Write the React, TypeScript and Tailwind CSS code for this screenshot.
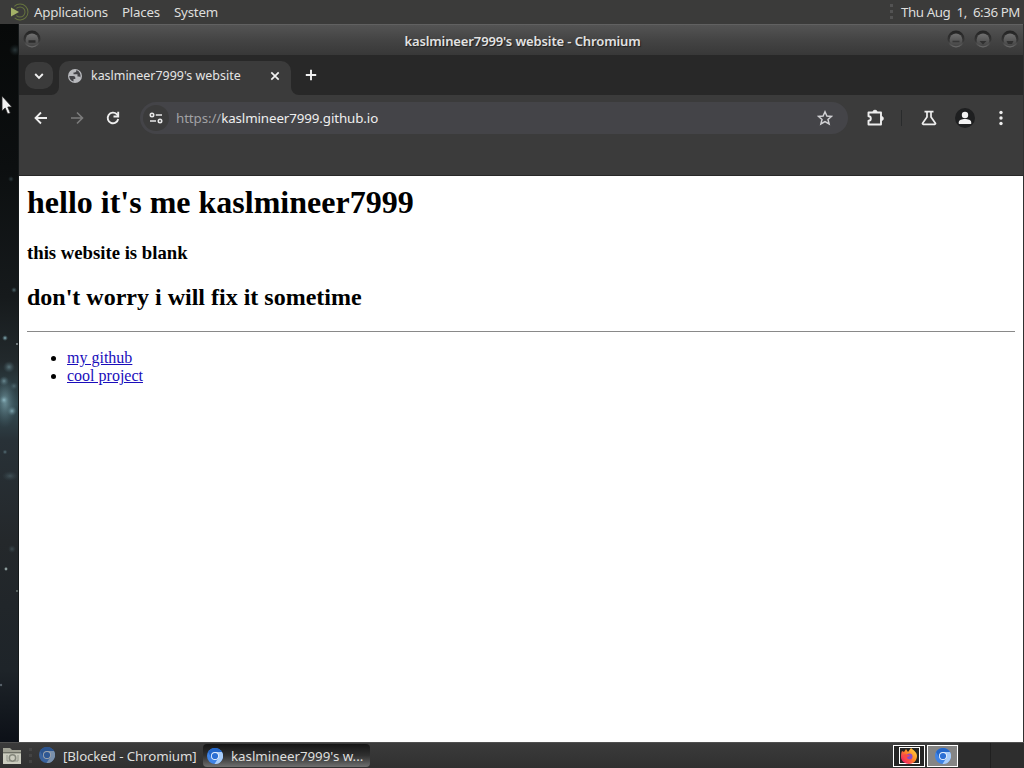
import React from 'react';

const WindowButton: React.FC<{ shape: 'menu' | 'min' | 'max' | 'close' }> = ({ shape }) => (
  <svg width="20" height="22" viewBox="0 0 20 22" className="block">
    <defs>
      <linearGradient id={`ring-${shape}`} x1="0" y1="0" x2="0" y2="1">
        <stop offset="0" stopColor="#232323" />
        <stop offset="0.6" stopColor="#353535" />
        <stop offset="1" stopColor="#6c6c6c" />
      </linearGradient>
      <linearGradient id={`face-${shape}`} x1="0" y1="0" x2="0" y2="1">
        <stop offset="0" stopColor="#707070" />
        <stop offset="1" stopColor="#444444" />
      </linearGradient>
    </defs>
    <circle cx="10" cy="10" r="8.5" fill={`url(#ring-${shape})`} />
    <circle cx="10" cy="10.8" r="6.4" fill={`url(#face-${shape})`} />
    {shape === 'menu' && <path d="M6.5 12.5h7" stroke="#2b2b2b" strokeWidth="2.5" />}
    {shape === 'min' && <path d="M6.5 12.5h7" stroke="#363636" strokeWidth="1.6" />}
    {shape === 'max' && <path d="M6.5 12h7L10 15.5z" fill="#303030" />}
    {shape === 'close' && <path d="M6.5 12h7L12 15H8z" fill="#303030" />}
  </svg>
);

const ChromiumLogo: React.FC<{ dim?: boolean }> = ({ dim }) => (
  <svg width="16" height="16" viewBox="0 0 16 16" className={dim ? 'block shrink-0 opacity-60' : 'block shrink-0'}>
    <circle cx="8" cy="8" r="8" fill="#3f83e6" />
    <path d="M8 4h7a8 8 0 0 1-7.5 12L11.4 10z" fill="#a9cdfa" />
    <path d="M1.1 4A8 8 0 0 1 14.9 4H8a4 4 0 0 0-3.5 6z" fill="#2467c9" />
    <circle cx="8" cy="8" r="4" fill="#e6effb" />
    <circle cx="8" cy="8" r="3.1" fill="#2b6fd4" />
  </svg>
);

const Grip = () => (
  <div className="flex flex-col gap-[3px]">
    <span className="block h-[3px] w-[3px] bg-[#535353]" />
    <span className="block h-[3px] w-[3px] bg-[#535353]" />
    <span className="block h-[3px] w-[3px] bg-[#535353]" />
  </div>
);

const TopPanel = () => (
  <header className="flex h-6 shrink-0 items-center bg-[#3b3b3a] text-[13.33px] text-[#dededc]">
    <svg width="20" height="20" viewBox="0 0 20 20" className="ml-[10px] block shrink-0" fill="none">
      <circle cx="10" cy="10" r="8" stroke="#66733f" strokeWidth="1" strokeDasharray="37 13" transform="rotate(-135 10 10)" />
      <circle cx="10" cy="10" r="5" stroke="#66733f" strokeWidth="1" strokeDasharray="23 9" transform="rotate(-135 10 10)" />
      <path d="M1 5.5L9 10l-8 4.5z" fill="#a4b167" />
    </svg>
    <nav className="ml-1 flex gap-[14px] pt-[2px] tracking-[-0.22px] whitespace-nowrap">
      <span className="w-[74px]">Applications</span>
      <span className="w-[38px]">Places</span>
      <span>System</span>
    </nav>
    <div className="ml-auto flex items-center gap-2 pr-1">
      <Grip />
      <span className="w-[119px] pt-[2px] tracking-[-0.42px] whitespace-nowrap">Thu Aug&nbsp; 1,&nbsp; 6:36 PM</span>
    </div>
  </header>
);

const Wallpaper = () => (
  <svg width="19" height="718" viewBox="0 0 19 718" className="block shrink-0">
    <defs>
      <linearGradient id="sky" x1="0" y1="0" x2="0" y2="1">
        <stop offset="0" stopColor="#070909" />
        <stop offset="0.2" stopColor="#0c0f10" />
        <stop offset="0.38" stopColor="#161a1c" />
        <stop offset="0.47" stopColor="#22292c" />
        <stop offset="0.53" stopColor="#344c53" />
        <stop offset="0.58" stopColor="#283137" />
        <stop offset="0.72" stopColor="#24282b" />
        <stop offset="0.9" stopColor="#1e2429" />
        <stop offset="1" stopColor="#0c1017" />
      </linearGradient>
      <radialGradient id="glow">
        <stop offset="0" stopColor="#91bac4" />
        <stop offset="1" stopColor="#50717b" stopOpacity="0" />
      </radialGradient>
    </defs>
    <rect width="19" height="718" fill="url(#sky)" />
    <ellipse cx="5" cy="378" rx="12" ry="26" fill="url(#glow)" opacity="0.6" />
    <circle cx="4" cy="376" r="5" fill="url(#glow)" />
    <circle cx="12" cy="387" r="5" fill="url(#glow)" opacity="0.8" />
    <circle cx="15" cy="26" r="6" fill="url(#glow)" opacity="0.25" />
    <circle cx="11" cy="155" r="3" fill="url(#glow)" opacity="0.3" />
    <circle cx="14" cy="266" r="3" fill="url(#glow)" opacity="0.5" />
    <circle cx="5" cy="314" r="3" fill="url(#glow)" />
    <circle cx="17" cy="320" r="1" fill="#8d9699" />
    <circle cx="9" cy="343" r="6" fill="url(#glow)" opacity="0.5" />
    <circle cx="4" cy="357" r="5" fill="url(#glow)" opacity="0.6" />
    <circle cx="14" cy="362" r="4" fill="url(#glow)" opacity="0.35" />
    <circle cx="6" cy="545" r="1.4" fill="#8d9d9c" />
    <circle cx="17" cy="567" r="1" fill="#677570" />
    <ellipse cx="10" cy="452" rx="8" ry="5" fill="url(#glow)" opacity="0.25" />
    <circle cx="12" cy="525" r="4" fill="url(#glow)" opacity="0.25" />
    <circle cx="5" cy="428" r="2.5" fill="url(#glow)" opacity="0.5" />
    <circle cx="1" cy="661" r="1.2" fill="#59636b" />
    <rect x="18" width="1" height="718" fill="#15191a" />
  </svg>
);

const TitleBar = () => (
  <div className="flex h-[31px] shrink-0 items-center border-t border-[#616161] bg-linear-to-b from-[#545454] via-[#444444] to-[#383838] pl-[3px] pr-[3px]">
    <WindowButton shape="menu" />
    <h1 className="flex-1 pt-[3px] pl-[57px] text-center text-[13px] font-semibold tracking-[-0.12px] whitespace-nowrap text-[#e2e2e2] [text-shadow:1px_1px_1px_#202020]">
      kaslmineer7999's website - Chromium
    </h1>
    <div className="flex gap-[7px]">
      <WindowButton shape="min" />
      <WindowButton shape="max" />
      <WindowButton shape="close" />
    </div>
  </div>
);

const TabStrip = () => (
  <div className="flex h-10 shrink-0 bg-[#282828] pl-[6px]">
    <button className="mt-[7px] flex h-[27px] w-7 items-center justify-center rounded-[10px] bg-[#3b3b3b]">
      <svg width="10" height="8" viewBox="0 0 10 8" fill="none" stroke="#f1f1f1" strokeWidth="1.9">
        <path d="M1.2 2L5 5.8 8.8 2" />
      </svg>
    </button>
    <div className="relative ml-[6px] mt-[6px] flex h-[34px] w-[232px] items-center rounded-t-[10px] bg-[#3b3b3b] pb-[5px] pl-2 text-[12.45px] text-[#e5e5e5]">
      {/* curved feet of the active tab */}
      <svg width="8" height="8" viewBox="0 0 8 8" className="absolute bottom-0 -left-2">
        <path d="M8 0v8H0a8 8 0 0 0 8-8z" fill="#3b3b3b" />
      </svg>
      <svg width="8" height="8" viewBox="0 0 8 8" className="absolute -right-2 bottom-0">
        <path d="M0 0v8h8a8 8 0 0 1-8-8z" fill="#3b3b3b" />
      </svg>
      <svg width="16" height="16" viewBox="0 0 16 16" className="shrink-0">
        <circle cx="8" cy="8" r="7" fill="#b8b9bd" />
        <path d="M2.2 8.1h4.1c1.3 0 2 .7 2 1.8v1.2H6.5v2.5A6 6 0 0 1 2.2 8.1zM9.3 2.1v.6c0 1-.8 1.7-1.7 1.7H6.5v1.8h4v2.2h1.4c.7 0 1.2.4 1.5 1A6 6 0 0 0 9.3 2.1z" fill="#444448" />
      </svg>
      <span className="ml-2 w-[151px] pt-[2px] whitespace-nowrap">kaslmineer7999's website</span>
      <svg width="10" height="10" viewBox="0 0 10 10" className="ml-[28px] shrink-0" stroke="#f1f1f1" strokeWidth="1.7">
        <path d="M1.3 1.3l7.4 7.4M8.7 1.3L1.3 8.7" />
      </svg>
    </div>
    <svg width="12" height="12" viewBox="0 0 12 12" className="mt-[14px] ml-[14px]" stroke="#f1f1f1" strokeWidth="1.9">
      <path d="M6 .8v10.4M.8 6h10.4" />
    </svg>
  </div>
);

const Toolbar = () => (
  <div className="flex h-[46px] shrink-0 items-center bg-[#3b3b3b] pl-[14px]">
    <svg width="16" height="16" viewBox="0 0 16 16" fill="none" stroke="#eeeeee" strokeWidth="1.8">
      <path d="M14 8H3M8 2.5L2.5 8 8 13.5" />
    </svg>
    <svg width="16" height="16" viewBox="0 0 16 16" className="ml-5" fill="none" stroke="#7c7c7c" strokeWidth="1.6">
      <path d="M2 8h11M8 2.5L13.5 8 8 13.5" />
    </svg>
    <svg width="16" height="16" viewBox="0 0 16 16" className="ml-5" fill="none" stroke="#eeeeee" strokeWidth="1.9">
      <path d="M13.2 9A5.3 5.3 0 1 1 11.8 4.2L13.3 6" />
      <path d="M13.2 1.8v4.7H8.5" />
    </svg>
    <div className="ml-[19px] flex h-8 w-[708px] items-center rounded-full bg-[#444448] pl-[3px] pr-[15px]">
      <span className="flex h-[26px] w-[26px] items-center justify-center rounded-full bg-[#3b3b3b]">
        <svg width="14" height="12" viewBox="0 0 14 12" fill="none" stroke="#e8e8e8" strokeWidth="1.6">
          <circle cx="3" cy="3" r="1.7" />
          <path d="M6.8 3H13M1 9h6" />
          <circle cx="11" cy="9" r="1.7" />
        </svg>
      </span>
      <span className="ml-[7px] pt-[2px] text-[13.33px] tracking-[-0.1px] whitespace-nowrap text-[#eeeeee]">
        <span className="text-[#a1a1a4]">https://</span>kaslmineer7999.github.io
      </span>
      <svg width="16" height="16" viewBox="0 0 16 16" className="ml-auto" fill="none" stroke="#d0d0d3" strokeWidth="1.5">
        <path d="M8 1.8l1.9 4.2 4.6.4-3.5 3 1.1 4.5L8 11.5l-4.1 2.4L5 9.4 1.5 6.4 6.1 6z" />
      </svg>
    </div>
    <svg width="18" height="18" viewBox="0 0 18 18" className="ml-[18px]" fill="none" stroke="#eeeeee" strokeWidth="1.9" strokeLinejoin="round">
      <path d="M2.5 3.5H15V15.5H2.5V11.8a2.3 2.3 0 0 0 0-4.6z" />
      <path d="M7 3a2 1.8 0 0 1 4 0zM15.5 7.5a1.8 2 0 0 1 0 4z" fill="#eeeeee" strokeWidth="1" />
    </svg>
    <span className="ml-[17px] h-4 w-px bg-[#292b2c]" />
    <svg width="16" height="16" viewBox="0 0 16 16" className="ml-[19px]" fill="none" stroke="#eeeeee" strokeWidth="1.7" strokeLinejoin="round">
      <path d="M3.5 1.7h9M6 2v5L1.6 13.2a.7.7 0 0 0 .6 1.1h11.6a.7.7 0 0 0 .6-1.1L10 7V2" />
    </svg>
    <span className="ml-[18px] flex h-5 w-5 items-center justify-center rounded-full bg-[#1e1f20]">
      <svg width="14" height="14" viewBox="0 0 14 14" fill="#f2f2f2">
        <circle cx="7" cy="4" r="3.2" />
        <path d="M.8 13v-1.8C.8 9.2 4 8 7 8s6.2 1.2 6.2 3.2V13z" />
      </svg>
    </span>
    <svg width="4" height="16" viewBox="0 0 4 16" className="ml-[24px]" fill="#eeeeee">
      <circle cx="2" cy="2.5" r="1.7" />
      <circle cx="2" cy="8" r="1.7" />
      <circle cx="2" cy="13.5" r="1.7" />
    </svg>
  </div>
);

const WebPage = () => (
  <main className="flex-1 bg-white px-2 font-['Liberation_Serif',serif] text-black">
    <h1 className="pt-2 text-[32px] leading-[37px] font-bold">hello it's me kaslmineer7999</h1>
    <h3 className="mt-[21px] text-[18.72px] leading-[21px] font-bold">this website is blank</h3>
    <h2 className="mt-5 text-[24px] leading-[28px] font-bold">don't worry i will fix it sometime</h2>
    <hr className="mt-5 border-t border-[#898989]" />
    <ul className="mt-[17px] list-disc pl-10 text-base leading-[18px]">
      <li><a href="#github" className="text-[#1a0dbb] underline">my github</a></li>
      <li><a href="#project" className="text-[#1a0dbb] underline">cool project</a></li>
    </ul>
  </main>
);

const BottomPanel = () => (
  <footer className="flex h-[26px] shrink-0 items-center border-t border-[#505050] bg-linear-to-b from-[#3b3b3b] to-[#303030] text-[13.33px] text-[#dededc]">
    <svg width="19" height="18" viewBox="0 0 19 18" className="ml-[3px] block shrink-0">
      <path d="M0 1h7l2 2h9v14H0z" fill="#a2a396" />
      <path d="M0 5h18v1.5H0z" fill="#6f7167" />
      <path d="M0 6.5h18V17H0z" fill="#cbccbf" />
      <circle cx="9.5" cy="11" r="3.2" fill="none" stroke="#83867b" strokeWidth="1.5" />
      <path d="M4 8v6h3M12 14h3V8" fill="none" stroke="#92958a" />
    </svg>
    <div className="ml-[7px] opacity-50"><Grip /></div>
    <div className="ml-[4px] flex w-[167px] items-center gap-2 pl-[3px]">
      <ChromiumLogo dim />
      <span className="pt-[2px] tracking-[-0.12px] whitespace-nowrap">[Blocked - Chromium]</span>
    </div>
    <div className="flex h-[23px] w-[167px] items-center gap-2 rounded-sm bg-linear-to-b from-[#151515] via-[#303030] to-[#707070] pl-1">
      <ChromiumLogo />
      <span className="pt-[2px] tracking-[-0.02px] whitespace-nowrap">kaslmineer7999's w...</span>
    </div>
    <div className="ml-auto flex h-full items-center gap-[2px]">
      <div className="flex h-[22px] w-8 items-center justify-center border border-white bg-[#242424]">
        <div className="flex h-[17px] w-[21px] items-center justify-center border border-white">
          <svg width="18" height="16" viewBox="0 0 18 16">
            <defs>
              <linearGradient id="fox" x1="1" y1="0" x2="0" y2="1">
                <stop offset="0" stopColor="#ffe34a" />
                <stop offset="0.45" stopColor="#ff8a24" />
                <stop offset="0.8" stopColor="#f32f58" />
                <stop offset="1" stopColor="#d4147e" />
              </linearGradient>
            </defs>
            <path d="M2 3l2 1 2-3 2 3 3-4c2 2 6 4 6 8 0 5-4 8-8 8s-8-3-8-7c0-2 0-4 1-6z" fill="url(#fox)" />
            <circle cx="9.5" cy="8.5" r="3" fill="#894bc7" />
            <path d="M3 7c2-1 3-1 5 0 1 0 2 0 2 1L7 9c0 2 2 3 5 2-2 3-7 3-9-4z" fill="#f84a47" />
          </svg>
        </div>
      </div>
      <div className="flex h-[22px] w-[31px] items-center justify-center border border-white bg-[#858585]">
        <ChromiumLogo />
      </div>
      <div className="-ml-px h-full w-8 border-r border-[#202020] bg-[#2d2d2d]" />
      <div className="-ml-[2px] h-full w-[33px] bg-[#2d2d2d]" />
    </div>
  </footer>
);

const App: React.FC = () => (
  <div className="relative flex h-screen w-screen flex-col overflow-hidden bg-[#3b3b3b] font-['Noto_Sans',sans-serif]">
    <TopPanel />
    <div className="flex min-h-0 flex-1">
      <Wallpaper />
      <section className="flex min-w-0 flex-1 flex-col border-r border-[#303030]">
        <TitleBar />
        <TabStrip />
        <Toolbar />
        <div className="h-[35px] shrink-0 border-b border-[#282828] bg-[#3b3b3b]" />
        <WebPage />
      </section>
    </div>
    <BottomPanel />
    {/* mouse pointer */}
    <svg width="13" height="22" viewBox="0 0 13 22" className="absolute top-[95px] left-0">
      <path d="M2 1v15l3.2-3 2.5 6 2.6-1.1L7.8 12H12z" fill="#f2f2f2" stroke="#222222" strokeWidth="0.8" />
    </svg>
  </div>
);

export default App;
